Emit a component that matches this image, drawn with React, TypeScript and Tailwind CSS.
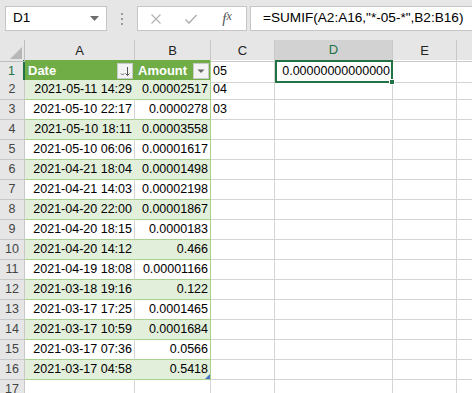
import React from 'react'

const rows: [string, string, string][] = [
  ['2021-05-11 14:29', '0.00002517', '04'],
  ['2021-05-10 22:17', '0.0000278', '03'],
  ['2021-05-10 18:11', '0.00003558', ''],
  ['2021-05-10 06:06', '0.00001617', ''],
  ['2021-04-21 18:04', '0.00001498', ''],
  ['2021-04-21 14:03', '0.00002198', ''],
  ['2021-04-20 22:00', '0.00001867', ''],
  ['2021-04-20 18:15', '0.0000183', ''],
  ['2021-04-20 14:12', '0.466', ''],
  ['2021-04-19 18:08', '0.00001166', ''],
  ['2021-03-18 19:16', '0.122', ''],
  ['2021-03-17 17:25', '0.0001465', ''],
  ['2021-03-17 10:59', '0.0001684', ''],
  ['2021-03-17 07:36', '0.0566', ''],
  ['2021-03-17 04:58', '0.5418', ''],
]

const cols = 'grid grid-cols-[25px_110px_76px_64px_118px_64px_1fr]'

function FilterButton({ sorted }: { sorted?: boolean }) {
  return (
    <div className="w-[16px] h-[16px] bg-[#f3f3f3] border border-[#c9c9c9] flex items-center justify-center shrink-0">
      {sorted ? (
        <svg width="12" height="12" viewBox="0 0 12 12">
          <path d="M2 8.5 L3.5 10 L5 8.5" stroke="#555" strokeWidth="1" fill="none" />
          <path d="M8.5 2 V10.5" stroke="#555" strokeWidth="1" />
          <path d="M6.5 8.5 L8.5 10.5 L10.5 8.5" stroke="#555" strokeWidth="1" fill="none" />
        </svg>
      ) : (
        <svg width="10" height="10" viewBox="0 0 10 10">
          <path d="M1.5 3.5 H8.5 L5 7 Z" fill="#666" />
        </svg>
      )}
    </div>
  )
}

export default function App() {
  return (
    <div className="w-[472px] h-[393px] overflow-hidden bg-white text-black font-['Liberation_Sans',Arial,sans-serif] text-[12.5px]">
      {/* Formula bar */}
      <div className="h-[40px] bg-[#e6e6e6] flex items-start pt-[6px] pl-[5px]">
        <div className="w-[102px] h-[25px] bg-white border border-[#c6c6c6] flex items-center justify-between pl-[7px] pr-[7px] text-[13.5px]">
          <span>D1</span>
          <svg width="9" height="6" viewBox="0 0 9 6">
            <path d="M0 0 H9 L4.5 5 Z" fill="#6d6d6d" />
          </svg>
        </div>
        <div className="w-[30px] h-[25px] flex flex-col items-center justify-center gap-[3px]">
          <span className="w-[2px] h-[2px] bg-[#9a9a9a]" />
          <span className="w-[2px] h-[2px] bg-[#9a9a9a]" />
          <span className="w-[2px] h-[2px] bg-[#9a9a9a]" />
        </div>
        <div className="w-[110px] h-[25px] bg-white border border-[#c6c6c6] flex items-center">
          <div className="w-[36px] flex justify-center">
            <svg width="12" height="12" viewBox="0 0 12 12">
              <path d="M1.5 1.5 L10.5 10.5 M10.5 1.5 L1.5 10.5" stroke="#b4b4b4" strokeWidth="1.3" />
            </svg>
          </div>
          <div className="w-[34px] flex justify-center">
            <svg width="14" height="12" viewBox="0 0 14 12">
              <path d="M1.5 6.5 L5 10 L12.5 2" stroke="#b4b4b4" strokeWidth="1.6" fill="none" />
            </svg>
          </div>
          <div className="w-[38px] flex justify-center font-['Liberation_Serif',serif] italic text-[15px] text-[#555]">
            f<span className="text-[12px]">x</span>
          </div>
        </div>
        <div className="ml-[3px] flex-1 h-[25px] bg-white border border-[#c6c6c6] border-r-0 flex items-center pl-[12px] text-[13.6px] whitespace-nowrap">
          =SUMIF(A2:A16,"*-05-*",B2:B16)
        </div>
      </div>

      {/* Column headers */}
      <div className={`${cols} h-[20px] bg-[#e6e6e6] text-[#222] text-[13px]`}>
        <div className="border-r border-b border-[#bdbdbd] relative">
          <svg className="absolute right-[2px] bottom-[2px]" width="12" height="12" viewBox="0 0 12 12">
            <path d="M12 0 V12 H0 Z" fill="#b7b7b7" />
          </svg>
        </div>
        {['A', 'B', 'C'].map((c) => (
          <div key={c} className="border-r border-b border-[#c8c8c8] flex items-center justify-center">
            {c}
          </div>
        ))}
        <div className="bg-[#d2d2d2] border-r border-[#c8c8c8] border-b-2 border-b-[#217346] flex items-center justify-center text-[#217346]">
          D
        </div>
        <div className="border-r border-b border-[#c8c8c8] flex items-center justify-center">E</div>
        <div className="border-b border-[#c8c8c8]" />
      </div>

      {/* Row 1 */}
      <div className={`${cols} h-[20px]`}>
        <div className="bg-[#e6e6e6] border-b border-[#c8c8c8] border-r-2 border-r-[#217346] flex items-center justify-center text-[#217346]">
          1
        </div>
        <div className="bg-[#70ad47] border-b border-[#a9d08e] flex items-center justify-between pl-[3px] pr-[2px] text-white font-bold text-[13px]">
          <span>Date</span>
          <FilterButton sorted />
        </div>
        <div className="bg-[#70ad47] border-b border-[#a9d08e] border-r border-r-[#a9d08e] flex items-center justify-between pl-[3px] pr-[1px] text-white font-bold text-[13px]">
          <span>Amount</span>
          <FilterButton />
        </div>
        <div className="border-r border-b border-[#d4d4d4] flex items-center pl-[2px]">05</div>
        <div className="relative border-2 border-[#217346] flex items-center justify-end pr-[1px]">
          0.00000000000000
          <span className="absolute right-[-4px] bottom-[-4px] w-[6px] h-[6px] bg-[#217346] border border-white" />
        </div>
        <div className="border-r border-b border-[#d4d4d4]" />
        <div className="border-b border-[#d4d4d4]" />
      </div>

      {/* Data rows */}
      {rows.map(([date, amount, c], i) => {
        const n = i + 2
        const band = n % 2 === 0
        const fill = band ? 'bg-[#e2efda]' : 'bg-white'
        return (
          <div key={n} className={`${cols} h-[20px]`}>
            <div className="bg-[#e6e6e6] border-r border-b border-[#c8c8c8] flex items-center justify-center text-[#444]">
              {n}
            </div>
            <div className={`${fill} border-b border-[#a9d08e] border-r ${band ? 'border-r-[#e2efda]' : 'border-r-[#d4d4d4]'} flex items-center justify-end pr-[2px]`}>
              {date}
            </div>
            <div className={`${fill} relative border-b border-[#a9d08e] border-r border-r-[#a9d08e] flex items-center justify-end pr-[2px]`}>
              {amount}
              {n === 16 && (
                <svg className="absolute right-0 bottom-0" width="5" height="5" viewBox="0 0 5 5">
                  <path d="M5 0 V5 H0 Z" fill="#4472c4" />
                </svg>
              )}
            </div>
            <div className="border-r border-b border-[#d4d4d4] flex items-center pl-[2px]">{c}</div>
            <div className="border-r border-b border-[#d4d4d4]" />
            <div className="border-r border-b border-[#d4d4d4]" />
            <div className="border-b border-[#d4d4d4]" />
          </div>
        )
      })}

      {/* Row 17 */}
      <div className={`${cols} h-[20px]`}>
        <div className="bg-[#e6e6e6] border-r border-b border-[#c8c8c8] flex items-center justify-center text-[#444]">
          17
        </div>
        <div className="border-r border-b border-[#d4d4d4]" />
        <div className="border-r border-b border-[#d4d4d4]" />
        <div className="border-r border-b border-[#d4d4d4]" />
        <div className="border-r border-b border-[#d4d4d4]" />
        <div className="border-r border-b border-[#d4d4d4]" />
        <div className="border-b border-[#d4d4d4]" />
      </div>
    </div>
  )
}
